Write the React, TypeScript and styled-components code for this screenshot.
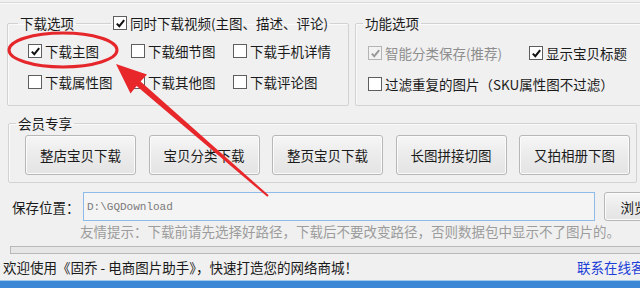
import { FC } from "react";
import styled, { createGlobalStyle } from "styled-components";

const GlobalStyle = createGlobalStyle`
  html, body {
    margin: 0;
    padding: 0;
    background: #f0f0f0;
  }
`;

const CheckBox: FC<{ checked?: boolean; disabled?: boolean; label: string }> = ({
  checked,
  disabled,
  label,
}) => (
  <CheckItem $disabled={disabled}>
    <Box $disabled={disabled}>
      {checked && (
        <svg width="11" height="11" viewBox="0 0 11 11">
          <path
            d="M1.8 5.6 L4.3 8.2 L9.2 2.2"
            fill="none"
            stroke={disabled ? "#9a9a9a" : "#111"}
            strokeWidth="2"
          />
        </svg>
      )}
    </Box>
    <span>{label}</span>
  </CheckItem>
);

const buttons = ["整店宝贝下载", "宝贝分类下载", "整页宝贝下载", "长图拼接切图", "又拍相册下图"];

const App: FC = () => {
  return (
    <>
      <GlobalStyle />
      <Page>
        <TopStrip />
        <OptionsRow>
          <LeftGroup>
            <Legend>
              <LegendText>下载选项</LegendText>
              <LegendLine />
              <LegendCheck>
                <CheckBox checked label="同时下载视频(主图、描述、评论)" />
              </LegendCheck>
            </Legend>
            <CheckGrid>
              <CheckBox checked label="下载主图" />
              <CheckBox label="下载细节图" />
              <CheckBox label="下载手机详情" />
              <CheckBox label="下载属性图" />
              <CheckBox label="下载其他图" />
              <CheckBox label="下载评论图" />
            </CheckGrid>
          </LeftGroup>
          <RightGroup>
            <Legend $offset={7}>
              <LegendText>功能选项</LegendText>
            </Legend>
            <FuncRows>
              <FuncRow>
                <FirstCell>
                  <CheckBox checked disabled label="智能分类保存(推荐)" />
                </FirstCell>
                <CheckBox checked label="显示宝贝标题" />
              </FuncRow>
              <FuncRow>
                <CheckBox label="过滤重复的图片（SKU属性图不过滤）" />
              </FuncRow>
            </FuncRows>
          </RightGroup>
        </OptionsRow>

        <MemberGroup>
          <Legend $offset={7}>
            <LegendText>会员专享</LegendText>
          </Legend>
          <ButtonRow>
            {buttons.map((b) => (
              <ActionButton key={b}>{b}</ActionButton>
            ))}
          </ButtonRow>
        </MemberGroup>

        <SaveRow>
          <SaveLabel>保存位置：</SaveLabel>
          <PathInput>D:\GQDownload</PathInput>
          <BrowseButton>浏览</BrowseButton>
        </SaveRow>
        <Hint>友情提示：下载前请先选择好路径，下载后不要改变路径，否则数据包中显示不了图片的。</Hint>
        <Progress />
        <StatusRow>
          <StatusText>欢迎使用《固乔 - 电商图片助手》，快速打造您的网络商城！</StatusText>
          <StatusLink>联系在线客服</StatusLink>
        </StatusRow>
        <BlueBar />

        <Annotation width="640" height="288" viewBox="0 0 640 288">
          <ellipse cx="63" cy="50" rx="54" ry="17" fill="none" stroke="#e5262b" strokeWidth="3" />
          <polygon
            points="116,64 147,74.5 140.6,81.4 268.7,195.2 267.3,196.8 136.6,86 130.5,93.5"
            fill="#e8272b"
          />
        </Annotation>
      </Page>
    </>
  );
};

const Page = styled.div`
  position: relative;
  width: 640px;
  height: 288px;
  overflow: hidden;
  background: #f0f0f0;
  color: #1a1a1a;
  font-family: "Noto Sans CJK SC", "Microsoft YaHei", sans-serif;
  font-size: 13.5px;
  line-height: 18px;
`;

const TopStrip = styled.div`
  height: 2px;
  border-bottom: 1px solid #d8d8d8;
  box-shadow: 0 1px 0 #fbfbfb;
`;

const OptionsRow = styled.div`
  display: flex;
  gap: 6px;
  margin-top: 11px;
  padding-left: 7px;
`;

const Group = styled.fieldset`
  margin: 0;
  padding: 0;
  min-width: 0;
  border: 1px solid #d2d2d2;
  border-radius: 2px;
  box-shadow: inset 1px 1px 0 #fafafa;
`;

const LeftGroup = styled(Group)`
  width: 342px;
  box-sizing: border-box;
  flex-shrink: 0;
`;

const RightGroup = styled(Group)`
  width: 300px;
  box-sizing: border-box;
  flex-shrink: 0;
`;

const MemberGroup = styled(Group)`
  margin: 8px 3px 0 8px;
`;

const Legend = styled.legend<{ $offset?: number }>`
  display: flex;
  align-items: center;
  padding: 0;
  margin-left: ${(p) => p.$offset ?? 10}px;
  height: 18px;
  line-height: 18px;
`;

const LegendText = styled.span`
  padding: 0 2px;
`;

const LegendLine = styled.span`
  width: 35px;
  height: 1px;
  background: #d2d2d2;
`;

const LegendCheck = styled.span`
  padding: 0 2px;
`;

const CheckItem = styled.label<{ $disabled?: boolean }>`
  display: inline-flex;
  align-items: center;
  gap: 3px;
  white-space: nowrap;
  height: 20px;
  color: ${(p) => (p.$disabled ? "#8e8e8e" : "#1a1a1a")};
`;

const Box = styled.span<{ $disabled?: boolean }>`
  display: inline-flex;
  align-items: center;
  justify-content: center;
  width: 14px;
  height: 14px;
  box-sizing: border-box;
  border: 1px solid ${(p) => (p.$disabled ? "#b4b4b4" : "#5e5e5e")};
  background: ${(p) => (p.$disabled ? "#f2f2f2" : "#fff")};
`;

const CheckGrid = styled.div`
  display: grid;
  grid-template-columns: 103px 102px auto;
  row-gap: 11px;
  padding: 9px 0 13px 20px;
`;

const FuncRows = styled.div`
  display: flex;
  flex-direction: column;
  gap: 11px;
  padding: 11px 0 11px 12px;
`;

const FuncRow = styled.div`
  display: flex;
  align-items: center;
`;

const FirstCell = styled.div`
  width: 161px;
`;

const ButtonRow = styled.div`
  display: flex;
  gap: 12.5px;
  padding: 3px 0 7px 16px;
`;

const ActionButton = styled.button`
  width: 111px;
  height: 40px;
  padding: 0;
  font-family: inherit;
  font-size: 13.5px;
  color: #1a1a1a;
  border: 1px solid #b7b7b7;
  border-radius: 3px;
  background: linear-gradient(#f6f6f6, #ebebeb 50%, #e4e4e4);
  box-shadow: inset 0 0 0 1px #fbfbfb;
`;

const SaveRow = styled.div`
  display: flex;
  align-items: center;
  margin-top: 9px;
  padding-left: 12px;
`;

const SaveLabel = styled.span`
  width: 71px;
  flex-shrink: 0;
`;

const PathInput = styled.div`
  width: 512px;
  height: 29px;
  box-sizing: border-box;
  flex-shrink: 0;
  display: flex;
  align-items: center;
  padding-left: 3px;
  border: 1px solid #8fbbe8;
  background: #f4f4f4;
  color: #7a7a7a;
  font-family: "Liberation Mono", monospace;
  font-size: 11px;
`;

const BrowseButton = styled(ActionButton)`
  width: 60px;
  height: 29px;
  margin-left: 9px;
  flex-shrink: 0;
`;

const Hint = styled.div`
  margin-top: 1px;
  padding-left: 80px;
  color: #9c9c9c;
  white-space: nowrap;
`;

const Progress = styled.div`
  margin: 6px 0 0 10px;
  height: 8px;
  box-sizing: border-box;
  border: 1px solid #b9b9b9;
  border-right: none;
  background: #e6e6e6;
`;

const StatusRow = styled.div`
  display: flex;
  margin-top: 4px;
  padding-left: 3px;
`;

const StatusText = styled.span`
  flex: 1;
  white-space: nowrap;
`;

const StatusLink = styled.span`
  width: 63px;
  flex-shrink: 0;
  white-space: nowrap;
  overflow: hidden;
  color: #1c3fd8;
`;

const BlueBar = styled.div`
  margin-top: 4px;
  height: 10px;
  background: #3b86d5;
  border-top: 1px solid #a3c8ee;
`;

const Annotation = styled.svg`
  position: absolute;
  left: 0;
  top: 0;
  pointer-events: none;
`;

export default App;
